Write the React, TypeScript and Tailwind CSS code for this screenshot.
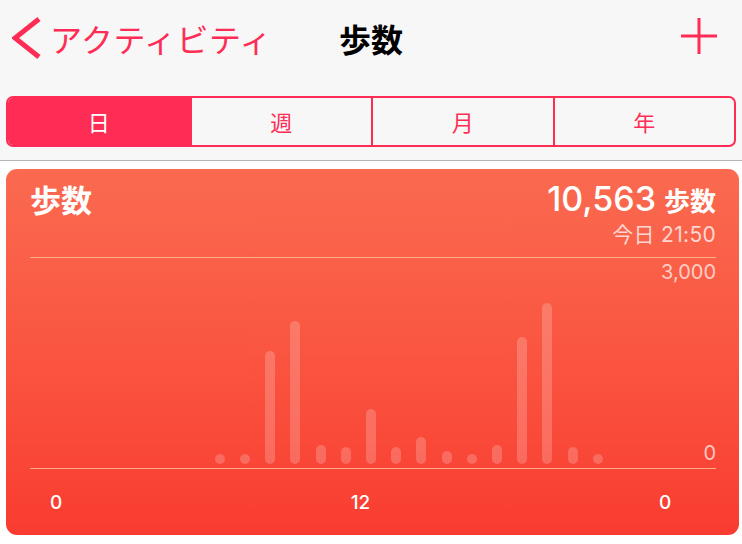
import React from "react";

// hourly step bars (px height, 0 = no bar)
const bars = [0, 0, 0, 0, 0, 0, 10, 10, 113, 143, 19, 17, 55, 17, 27, 13, 10, 19, 127, 161, 17, 10, 0, 0];

const segments = ["日", "週", "月", "年"];

export default function App() {
  return (
    <div className="w-[742px] h-[544px] overflow-hidden bg-white font-['Inter','Noto_Sans_CJK_JP',sans-serif]">
      <div className="bg-[#f7f7f7] border-b border-[#b5b5b5]">
        <div className="h-[76px] grid grid-cols-[1fr_auto_1fr] items-center">
          <div className="flex items-center pl-[12px]">
            <svg width="32" height="44" viewBox="0 0 32 44">
              <polyline points="27,3 3,22 27,41" fill="none" stroke="#ff2d55" strokeWidth="5" />
            </svg>
            <span className="ml-[6px] text-[32px] tracking-[0.5px] leading-none text-[#ff2d55] font-['Noto_Sans_CJK_JP',sans-serif]">
              アクティビティ
            </span>
          </div>
          <div className="text-[32px] leading-none font-bold text-black font-['Noto_Sans_CJK_JP',sans-serif]">歩数</div>
          <div className="flex justify-end pr-[25px]">
            <svg width="36" height="36" viewBox="0 0 36 36" className="mb-[5px]">
              <path d="M18 0V36M0 18H36" stroke="#ff2d55" strokeWidth="3" />
            </svg>
          </div>
        </div>
        <div className="px-[6px] pt-[20px] pb-[13px]">
          <div className="grid grid-cols-4 h-[51px] border-2 border-[#ff2d55] rounded-[7px] overflow-hidden">
            {segments.map((s, i) => (
              <div
                key={s}
                className={
                  i === 0
                    ? "flex items-center justify-center bg-[#ff2d55] text-white text-[22px] font-['Noto_Sans_CJK_JP',sans-serif]"
                    : "flex items-center justify-center border-l-2 border-[#ff2d55] text-[#ff2d55] text-[22px] font-['Noto_Sans_CJK_JP',sans-serif]"
                }
              >
                {s}
              </div>
            ))}
          </div>
        </div>
      </div>

      <div className="px-[6px] pt-[8px]">
        <div className="w-[733px] h-[366px] rounded-[11px] bg-linear-to-b from-[#fa6a50] to-[#f93b30] pl-[24px] pr-[23px] text-white">
          <div className="h-[88px] pt-[12px] flex justify-between">
            <div className="text-[31px] leading-[36px] font-bold font-['Noto_Sans_CJK_JP',sans-serif]">歩数</div>
            <div className="flex flex-col items-end">
              <div className="flex items-baseline h-[36px] leading-[36px]">
                <span className="text-[34px] font-medium font-['Inter',sans-serif]">10,563</span>
                <span className="ml-[8px] text-[26px] font-bold font-['Noto_Sans_CJK_JP',sans-serif]">歩数</span>
              </div>
              <div className="mt-[6px] text-[21px] leading-[24px] text-white/75 tracking-[0.3px]">今日 21:50</div>
            </div>
          </div>

          <div className="h-[212px] flex border-t border-b border-[#ffad86]">
            <div className="w-[635px] pl-[26px] pb-[4px] flex items-end">
              {bars.map((h, i) => (
                <div key={i} className="flex-1 flex justify-center">
                  {h > 0 && <div className="w-[10px] rounded-full bg-white/20" style={{ height: h }} />}
                </div>
              ))}
            </div>
            <div className="flex-1 flex flex-col justify-between items-end pt-[2px] pb-[3px] text-[20px] leading-[24px] text-white/70">
              <span>3,000</span>
              <span>0</span>
            </div>
          </div>

          <div className="ml-[26px] w-[609px] pt-[22px] flex justify-between text-[19px] leading-[24px] font-medium">
            {["0", "12", "0"].map((l, i) => (
              <div key={i} className="w-0 flex justify-center">
                <span>{l}</span>
              </div>
            ))}
          </div>
        </div>
      </div>
    </div>
  );
}
